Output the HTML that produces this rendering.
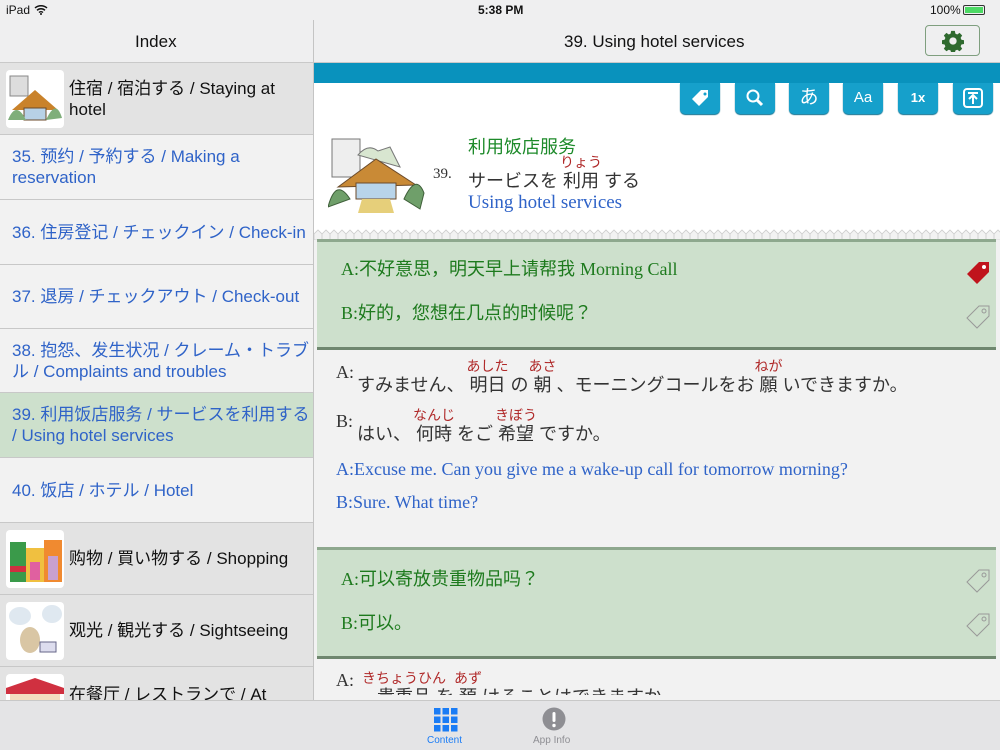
<!DOCTYPE html>
<html><head><meta charset="utf-8">
<style>
*{margin:0;padding:0;box-sizing:border-box}
body{width:1000px;height:750px;overflow:hidden;position:relative;background:#f2f2f2;font-family:"Liberation Sans","Noto Sans CJK JP",sans-serif}
.abs{position:absolute}
.serif{font-family:"Liberation Serif","Noto Sans CJK SC",serif}
.row{position:absolute;left:0;width:313px;border-bottom:1px solid #c8c8c8;font-size:17px;color:#2f63c8;padding-left:12px;display:flex;align-items:center;line-height:21px}
.img{width:58px;height:58px;background:#fff;border-radius:4px;position:absolute;left:6px;overflow:hidden}
.btn{position:absolute;top:83px;width:40px;height:31px;background:#16a0cb;border-radius:0 0 5px 5px;color:#fff;text-align:center;line-height:29px;font-size:15px;box-shadow:0 1px 1px #0a6f8f}
.green{position:absolute;left:317px;width:679px;background:#cde0cc;border-top:3px solid #8ea88e;border-bottom:3px solid #6f876f}
.gt{position:absolute;left:24px;font-size:18px;color:#1d7a1d}
.r{position:relative;display:inline-block}
.r i{position:absolute;left:50%;transform:translateX(-50%);top:-19px;font-style:normal;font-size:14px;color:#b02a2a;white-space:nowrap}
.tag{position:absolute;left:648px}
</style></head><body>
<div class="abs" style="left:0;top:0;width:1000px;height:63px;background:#efeff0;border-bottom:1px solid #c9c9c9"></div>
<div class="abs" style="left:6px;top:3px;font-size:12px;color:#111">iPad</div>
<svg class="abs" style="left:34px;top:4px" width="14" height="11" viewBox="0 0 14 11"><path d="M1 4a9 9 0 0112 0M3 6.3a6 6 0 018 0M5 8.5a3 3 0 014 0" stroke="#111" stroke-width="1.5" fill="none"/><circle cx="7" cy="10" r="1" fill="#111"/></svg>
<div class="abs" style="left:478px;top:3px;font-size:12px;font-weight:bold;color:#111">5:38 PM</div>
<div class="abs" style="left:930px;top:3px;font-size:12px;color:#111">100%</div>
<div class="abs" style="left:963px;top:5px;width:22px;height:10px;border:1px solid #333;border-radius:2px;padding:1px"><div style="background:#4cd964;width:100%;height:100%"></div></div>
<div class="abs" style="left:313px;top:20px;width:1px;height:680px;background:#c4c4c4"></div>
<div class="abs" style="left:135px;top:32px;font-size:17px;color:#111">Index</div>
<div class="abs" style="left:564px;top:32px;font-size:17px;color:#111">39. Using hotel services</div>
<div class="abs" style="left:925px;top:25px;width:55px;height:31px;border:1px solid #7f9f7f;border-radius:4px;text-align:center">
<svg width="22" height="22" viewBox="0 0 24 24" style="margin-top:4px"><path fill="#2f6a2f" d="M10 1h4l.6 3 2 .9 2.6-1.7 2.8 2.8-1.7 2.6.9 2 3 .6v4l-3 .6-.9 2 1.7 2.6-2.8 2.8-2.6-1.7-2 .9-.6 3h-4l-.6-3-2-.9-2.6 1.7-2.8-2.8 1.7-2.6-.9-2-3-.6v-4l3-.6.9-2-1.7-2.6 2.8-2.8 2.6 1.7 2-.9zM12 8a4 4 0 100 8 4 4 0 000-8z"/></svg></div>

<div class="row" style="top:63px;height:72px;background:#e3e3e3;color:#111;padding-left:69px"><div class="img" style="top:7px"><svg width="58" height="58"><rect x="4" y="6" width="18" height="20" fill="#ddd" stroke="#888"/><path d="M6 40 L29 20 L52 40Z" fill="#c9822a"/><rect x="18" y="38" width="22" height="12" fill="#b7d1e6" stroke="#6b4a2a"/><path d="M2 50 Q10 30 20 50Z M40 50 Q50 28 56 48Z" fill="#7fae7a"/></svg></div><span>住宿 / 宿泊する / Staying at hotel</span></div>
<div class="row" style="top:135px;height:65px">35. 预约 / 予約する / Making a reservation</div>
<div class="row" style="top:200px;height:65px">36. 住房登记 / チェックイン / Check-in</div>
<div class="row" style="top:265px;height:64px">37. 退房 / チェックアウト / Check-out</div>
<div class="row" style="top:329px;height:64px">38. 抱怨、发生状况 / クレーム・トラブル / Complaints and troubles</div>
<div class="row" style="top:393px;height:65px;background:#cde0cc">39. 利用饭店服务 / サービスを利用する / Using hotel services</div>
<div class="row" style="top:458px;height:65px">40. 饭店 / ホテル / Hotel</div>
<div class="row" style="top:523px;height:72px;background:#e3e3e3;color:#111;padding-left:69px"><div class="img" style="top:7px"><svg width="58" height="58"><rect x="4" y="12" width="16" height="40" fill="#3a9a4a"/><rect x="20" y="18" width="18" height="34" fill="#f0c040"/><rect x="38" y="10" width="18" height="42" fill="#f08a30"/><rect x="4" y="36" width="16" height="6" fill="#d03040"/><rect x="24" y="32" width="10" height="18" fill="#e060a0"/><rect x="42" y="26" width="10" height="24" fill="#c8a0d0"/></svg></div><span>购物 / 買い物する / Shopping</span></div>
<div class="row" style="top:595px;height:72px;background:#e3e3e3;color:#111;padding-left:69px"><div class="img" style="top:7px"><svg width="58" height="58"><ellipse cx="14" cy="14" rx="11" ry="9" fill="#dfe8f0"/><ellipse cx="46" cy="12" rx="10" ry="9" fill="#dfe8f0"/><ellipse cx="24" cy="38" rx="10" ry="13" fill="#d9c6a4"/><rect x="34" y="40" width="16" height="10" fill="#dde" stroke="#668"/></svg></div><span>观光 / 観光する / Sightseeing</span></div>
<div class="row" style="top:667px;height:72px;background:#e3e3e3;color:#111;padding-left:69px;align-items:flex-start;padding-top:17px"><div class="img" style="top:7px"><svg width="58" height="58"><path d="M0 14 L29 4 L58 14 V20 H0Z" fill="#d03040"/><rect x="4" y="20" width="50" height="30" fill="#f3dcc0"/></svg></div><span>在餐厅 / レストランで / At</span></div>

<div class="abs" style="left:314px;top:63px;width:686px;height:20px;background:#0992bd"></div>
<div class="abs" style="left:314px;top:83px;width:686px;height:152px;background:#fff"></div>
<div class="btn" style="left:680px"><svg width="20" height="20" viewBox="0 0 20 20" style="margin-top:5px"><path fill="#fff" d="M11 2h7v7l-9 9-7-7zM15 4.5a1.5 1.5 0 100 3 1.5 1.5 0 000-3z"/></svg></div>
<div class="btn" style="left:735px"><svg width="20" height="20" viewBox="0 0 20 20" style="margin-top:5px"><circle cx="8" cy="8" r="5.5" fill="none" stroke="#fff" stroke-width="2"/><path d="M12 12l5 5" stroke="#fff" stroke-width="3"/></svg></div>
<div class="btn" style="left:789px;font-size:19px">あ</div>
<div class="btn" style="left:843px">Aa</div>
<div class="btn" style="left:898px;font-size:13px;font-weight:bold">1x</div>
<div class="btn" style="left:953px"><svg width="22" height="22" viewBox="0 0 22 22" style="margin-top:4px"><rect x="2" y="2" width="18" height="18" rx="3" fill="none" stroke="#fff" stroke-width="2"/><path d="M6 6h10M11 8v9M7 12l4-4 4 4" stroke="#fff" stroke-width="2" fill="none"/></svg></div>

<div class="abs" style="left:328px;top:137px;width:98px;height:76px"><svg width="98" height="76"><rect x="4" y="2" width="28" height="38" fill="#eee" stroke="#777"/><path d="M30 18 Q40 6 50 14 L62 10 L72 30Z" fill="#d8e6d0" stroke="#777"/><path d="M10 50 L48 22 L88 48Z" fill="#c98a36" stroke="#6b4a2a"/><rect x="28" y="46" width="40" height="16" fill="#b8d4ea" stroke="#6b4a2a"/><path d="M0 70 Q8 40 22 62Z M76 62 Q88 36 96 56 L92 72Z" fill="#6f9f6a" stroke="#3f5f3a"/><path d="M34 62 L62 62 L66 76 L30 76Z" fill="#e6cf7a"/></svg></div>
<div class="abs serif" style="left:433px;top:166px;font-size:15px;color:#333">39.</div>
<div class="abs" style="left:468px;top:133px;font-size:18px;color:#1d8a2a">利用饭店服务</div>
<div class="abs" style="left:468px;top:169px;font-size:18px;color:#333;line-height:24px">サービスを <span class="r">利用<i>りょう</i></span> する</div>
<div class="abs serif" style="left:468px;top:192px;font-size:19px;color:#2f63c8">Using hotel services</div>
<svg class="abs" style="left:314px;top:228px" width="686" height="12"><defs><pattern id="z" width="8" height="12" patternUnits="userSpaceOnUse"><path d="M0 12 L0 6 L4 2 L8 6 L8 12Z" fill="#f2f2f2" stroke="#ccc" stroke-width="0.8"/></pattern></defs><rect width="686" height="12" fill="url(#z)"/></svg>

<div class="green" style="top:239px;height:111px">
<div class="gt" style="top:13px"><span class="serif">A:</span>不好意思，明天早上请帮我 <span class="serif">Morning Call</span></div>
<div class="gt" style="top:57px"><span class="serif">B:</span>好的，您想在几点的时候呢？</div>
<svg class="tag" style="top:18px" width="26" height="26" viewBox="0 0 26 26"><path d="M14 2h10v10L12 24 2 14z" fill="#c0141c"/><circle cx="19" cy="7" r="2" fill="#fff"/></svg>
<svg class="tag" style="top:62px" width="26" height="26" viewBox="0 0 26 26"><path d="M14 2h10v10L12 24 2 14z" fill="none" stroke="#999"/><circle cx="19" cy="7" r="2" fill="none" stroke="#999"/></svg>
</div>

<div class="abs serif" style="left:336px;top:362px;font-size:18px;color:#333">A:</div>
<div class="abs" style="left:357px;top:373px;font-size:18px;color:#333;line-height:24px;white-space:nowrap">すみません、 <span class="r">明日<i>あした</i></span> の <span class="r">朝<i>あさ</i></span> 、モーニングコールをお <span class="r">願<i>ねが</i></span> いできますか。</div>
<div class="abs serif" style="left:336px;top:411px;font-size:18px;color:#333">B:</div>
<div class="abs" style="left:357px;top:422px;font-size:18px;color:#333;line-height:24px;white-space:nowrap">はい、 <span class="r">何時<i>なんじ</i></span> をご <span class="r">希望<i>きぼう</i></span> ですか。</div>
<div class="abs serif" style="left:336px;top:459px;font-size:18px;color:#2f63c8">A:Excuse me. Can you give me a wake-up call for tomorrow morning?</div>
<div class="abs serif" style="left:336px;top:492px;font-size:18px;color:#2f63c8">B:Sure. What time?</div>

<div class="green" style="top:547px;height:112px">
<div class="gt" style="top:15px"><span class="serif">A:</span>可以寄放贵重物品吗？</div>
<div class="gt" style="top:59px"><span class="serif">B:</span>可以。</div>
<svg class="tag" style="top:18px" width="26" height="26" viewBox="0 0 26 26"><path d="M14 2h10v10L12 24 2 14z" fill="none" stroke="#999"/><circle cx="19" cy="7" r="2" fill="none" stroke="#999"/></svg>
<svg class="tag" style="top:62px" width="26" height="26" viewBox="0 0 26 26"><path d="M14 2h10v10L12 24 2 14z" fill="none" stroke="#999"/><circle cx="19" cy="7" r="2" fill="none" stroke="#999"/></svg>
</div>
<div class="abs serif" style="left:336px;top:670px;font-size:18px;color:#333">A:</div>
<div class="abs" style="left:357px;top:662px;width:640px;height:33px;overflow:hidden"><div style="position:absolute;top:23px;left:20px;font-size:18px;color:#333;line-height:24px;white-space:nowrap"><span class="r">貴重品<i>きちょうひん</i></span> を <span class="r">預<i>あず</i></span> けることはできますか。</div></div>

<div class="abs" style="left:0;top:700px;width:1000px;height:50px;background:#e4e4e6;border-top:1px solid #c8c8c8"></div>
<svg class="abs" style="left:434px;top:708px" width="24" height="24"><g fill="#1a7cf5"><rect x="0" y="0" width="6.5" height="6.5"/><rect x="8.5" y="0" width="6.5" height="6.5"/><rect x="17" y="0" width="6.5" height="6.5"/><rect x="0" y="8.5" width="6.5" height="6.5"/><rect x="8.5" y="8.5" width="6.5" height="6.5"/><rect x="17" y="8.5" width="6.5" height="6.5"/><rect x="0" y="17" width="6.5" height="6.5"/><rect x="8.5" y="17" width="6.5" height="6.5"/><rect x="17" y="17" width="6.5" height="6.5"/></g></svg>
<div class="abs" style="left:427px;top:735px;font-size:10px;color:#1a7cf5">Content</div>
<svg class="abs" style="left:542px;top:707px" width="24" height="24"><circle cx="12" cy="12" r="11.5" fill="#8e8e93"/><rect x="10.5" y="5" width="3" height="10" rx="1.5" fill="#fff"/><circle cx="12" cy="18.5" r="1.7" fill="#fff"/></svg>
<div class="abs" style="left:533px;top:735px;font-size:10px;color:#8e8e93">App Info</div>
</body></html>
